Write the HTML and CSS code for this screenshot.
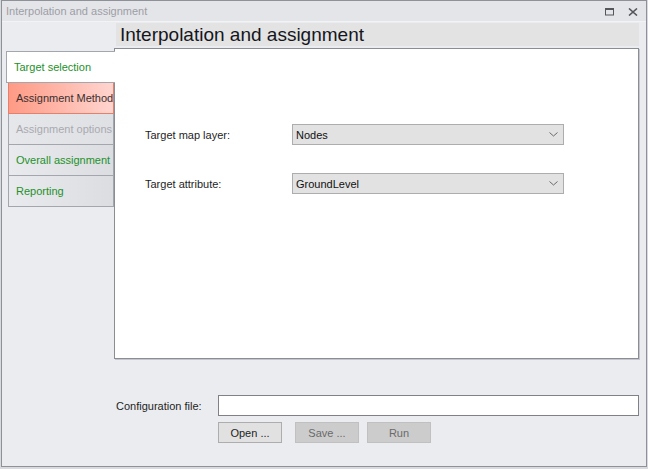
FILE: index.html
```html
<!DOCTYPE html>
<html lang="en">
<head>
  <meta charset="UTF-8" />
  <title>Interpolation and assignment</title>
  <link rel="stylesheet" href="styles.css">
</head>
<body>
  <div class="window">
    <div class="titlebar">
      <span class="title">Interpolation and assignment</span>
      <span class="caption-btns">
        <svg class="cap-icon" width="9" height="8" viewBox="0 0 9 8">
          <rect x="0.5" y="0.5" width="8" height="6.5" fill="none" stroke="#55565c" stroke-width="1"/>
          <rect x="0" y="0" width="9" height="2" fill="#55565c"/>
        </svg>
        <svg class="cap-icon" width="10" height="8" viewBox="0 0 10 8">
          <path d="M1 0.5 L9 7.5 M9 0.5 L1 7.5" stroke="#55565c" stroke-width="1.6" fill="none"/>
        </svg>
      </span>
    </div>

    <div class="main">
      <div class="tabctl">
        <div class="tabs">
          <div class="tab tab-active">Target selection</div>
          <div class="tab tab-error">Assignment Method</div>
          <div class="tab tab-disabled">Assignment options</div>
          <div class="tab">Overall assignment</div>
          <div class="tab">Reporting</div>
        </div>

        <div class="pagecol">
          <div class="heading">Interpolation and assignment</div>
          <div class="page">
            <div class="field">
              <label class="field-label">Target map layer:</label>
              <div class="combo">
                <span>Nodes</span>
                <svg width="9" height="5" viewBox="0 0 9 5"><polyline points="0.5,0.5 4.5,4 8.5,0.5" fill="none" stroke="#6a6a6a" stroke-width="1"/></svg>
              </div>
            </div>
            <div class="field">
              <label class="field-label">Target attribute:</label>
              <div class="combo">
                <span>GroundLevel</span>
                <svg width="9" height="5" viewBox="0 0 9 5"><polyline points="0.5,0.5 4.5,4 8.5,0.5" fill="none" stroke="#6a6a6a" stroke-width="1"/></svg>
              </div>
            </div>
          </div>
        </div>
      </div>

      <div class="config">
        <label class="config-label">Configuration file:</label>
        <div class="textbox"></div>
      </div>
      <div class="buttons">
        <button class="btn">Open ...</button>
        <button class="btn btn-disabled btn-save">Save ...</button>
        <button class="btn btn-disabled btn-run">Run</button>
      </div>
    </div>
  </div>
</body>
</html>
```

FILE: styles.css
```css
html, body {
  margin: 0;
  padding: 0;
}
body {
  background-color: #d9dadf;
  font-family: "Liberation Sans", Arial, sans-serif;
  font-size: 11px;
  color: #1e1e1e;
  width: 648px;
  height: 469px;
}
.window {
  box-sizing: border-box;
  margin-left: 1px;
  width: 646px;
  height: 467px;
  border: 1px solid #8f9199;
  background-color: #ebecf0;
  display: flex;
  flex-direction: column;
}

/* title bar */
.titlebar {
  height: 20px;
  display: flex;
  align-items: center;
  justify-content: space-between;
  padding: 0 8px 0 4px;
  background-color: #e4e5e9;
  border-bottom: 1px solid #f2f3f5;
}
.title {
  color: #9d9ea5;
}
.caption-btns {
  display: flex;
  align-items: center;
  gap: 14px;
  padding-top: 2px;
}
.cap-icon {
  display: block;
}

.main {
  padding: 1px 6px 0 4px;
  flex: 1;
}

/* tab control */
.tabctl {
  display: flex;
}
.tabs {
  width: 108px;
  flex: none;
  padding-top: 28px;
}
.tab {
  box-sizing: border-box;
  width: 106px;
  height: 31px;
  margin-left: 2px;
  padding-left: 7px;
  display: flex;
  align-items: center;
  white-space: nowrap;
  overflow: hidden;
  border: 1px solid #a4a6ad;
  border-top: none;
  background: linear-gradient(to right, #e9eaed, #dcdde1);
  color: #23912a;
}
.tab-active {
  position: relative;
  z-index: 1;
  width: 109px;
  height: 32px;
  margin-left: 0;
  border-top: 1px solid #a4a6ad;
  border-right: none;
  background: #ffffff;
  color: #23912a;
}
.tab-error {
  border-color: #e5806d;
  background: linear-gradient(to right, #fe9a85, #ffd5cf);
  color: #3a3030;
}
.tab-disabled {
  background: linear-gradient(to right, #e6e7ea, #dfe0e4);
  color: #a9aab0;
}

.pagecol {
  flex: 1;
}
.heading {
  height: 23px;
  margin-left: 2px;
  margin-right: 1px;
  padding-left: 4px;
  background-color: #e3e3e4;
  font-size: 19px;
  line-height: 23px;
  color: #15161c;
}
.page {
  box-sizing: border-box;
  margin-top: 2px;
  width: 525px;
  height: 311px;
  border: 1px solid #8b8d95;
  box-shadow: 1px 1px 0 #c5c6cb;
  background-color: #ffffff;
  padding: 75px 0 0 30px;
  display: flex;
  flex-direction: column;
  gap: 28px;
}
.field {
  display: flex;
  align-items: center;
  height: 21px;
}
.field-label {
  width: 147px;
}
.combo {
  box-sizing: border-box;
  width: 272px;
  height: 21px;
  border: 1px solid #adadad;
  background-color: #e2e2e2;
  display: flex;
  align-items: center;
  justify-content: space-between;
  padding: 0 5px 0 3px;
  color: #111;
}
.combo svg {
  display: block;
}

/* configuration */
.config {
  display: flex;
  align-items: center;
  margin-top: 36px;
  padding-left: 110px;
}
.config-label {
  width: 102px;
}
.textbox {
  box-sizing: border-box;
  width: 421px;
  height: 21px;
  border: 1px solid #7f8088;
  background-color: #ffffff;
}
.buttons {
  display: flex;
  margin-top: 6px;
  padding-left: 212px;
}
.btn {
  box-sizing: border-box;
  width: 64px;
  height: 21px;
  padding: 0;
  border: 1px solid #adadad;
  background-color: #e1e1e1;
  font-family: "Liberation Sans", Arial, sans-serif;
  font-size: 11px;
  color: #1e1e1e;
}
.btn-disabled {
  border-color: #c0c0c0;
  background-color: #cccccc;
  color: #6a6a6a;
}
.btn-save {
  margin-left: 13px;
}
.btn-run {
  margin-left: 8px;
}
```
